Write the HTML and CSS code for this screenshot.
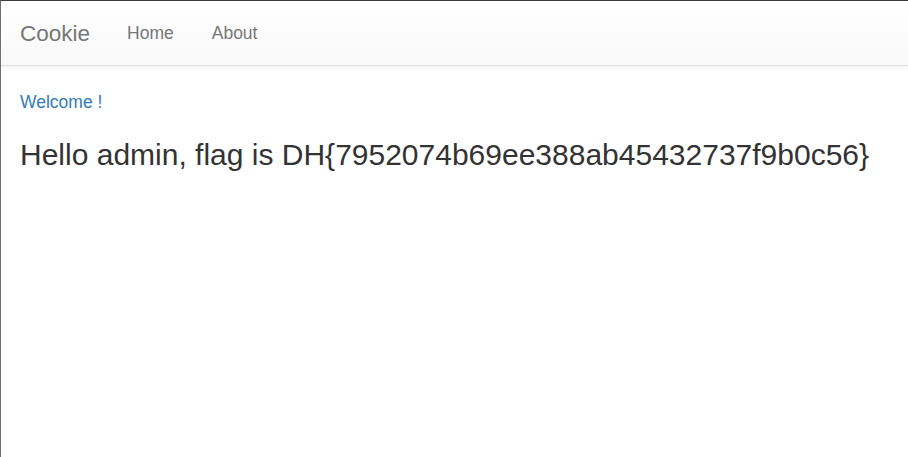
FILE: index.html
```html
<!DOCTYPE html>
<html>
<head>
<meta charset="utf-8">
<title>Cookie</title>
<link rel="stylesheet" href="styles.css">
</head>
<body>
<div class="frame">
  <nav class="navbar">
    <a class="brand" href="#">Cookie</a>
    <ul class="nav">
      <li><a href="#">Home</a></li>
      <li><a href="#">About</a></li>
    </ul>
  </nav>
  <main class="content">
    <a class="welcome" href="#">Welcome !</a>
    <h3 class="flag">Hello admin, flag is DH{7952074b69ee388ab45432737f9b0c56}</h3>
  </main>
</div>
</body>
</html>
```
FILE: styles.css
```css
html, body {
  margin: 0;
  padding: 0;
  height: 100%;
  background: #fff;
}
body {
  font-family: "Liberation Sans", Arial, sans-serif;
  color: #333;
}
.frame {
  box-sizing: border-box;
  height: 100%;
  border-top: 1px solid #3a3a3a;
  border-left: 1px solid #6e6e6e;
  overflow: hidden;
}
.navbar {
  display: flex;
  align-items: center;
  height: 65px;
  box-sizing: border-box;
  padding-left: 19px;
  padding-top: 1px;
  background: linear-gradient(to bottom, #ffffff 0%, #f8f8f8 100%);
  border-bottom: 1px solid #e2e2e2;
  box-shadow: inset 0 1px 0 rgba(255,255,255,.15), 0 1px 5px rgba(0,0,0,.075);
}
.brand {
  font-size: 22.5px;
  color: #777;
  text-decoration: none;
  line-height: 25px;
  margin-right: 18px;
}
.nav {
  display: flex;
  list-style: none;
  margin: 0;
  padding: 0;
}
.nav a {
  display: block;
  padding: 0 19px;
  font-size: 17.5px;
  color: #777;
  text-decoration: none;
  line-height: 25px;
}
.content {
  padding: 24px 19px 0;
}
.welcome {
  display: block;
  font-size: 17.5px;
  line-height: 25px;
  color: #337ab7;
  text-decoration: none;
}
.flag {
  margin: 23px 0 0;
  font-size: 30px;
  font-weight: 500;
  line-height: 33px;
  color: #333;
}
```
